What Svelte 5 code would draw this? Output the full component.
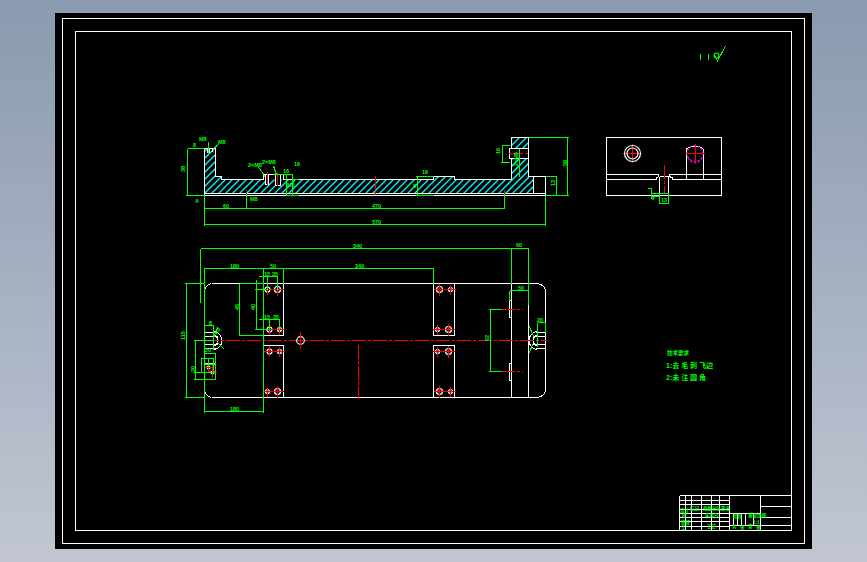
<script>
	// page coordinates: the svg viewBox starts where the black sheet does
	const white = `
		M62.5 18.5 H804.5 V543.5 H62.5 Z
		M75.5 31.5 H791.5 V530.5 H75.5 Z

		M204.5 148.5 H215.5 V176.5 H221.5 V179.5 H263.5 V174.5 H283.5 V179.5 H433.5 V176.5 H454.5 V179.5
		H511.5 V158.5 H509.5 V148.5 H511.5 V137.5 H528.5 V176.5 H545.5 V195.5 H204.5 Z
		M204.5 193.5 H545.5 M533.5 176.5 V193.5 M509.5 148.5 H528.5 M509.5 158.5 H528.5
		M265.5 174.5 V184.5 H268.5 V174.5 M275.5 174.5 V185.5 H280.5 V174.5 M283.5 174.5 V179.5
		M207.5 148.5 V152.5 H209.5 V148.5 M212.5 148.5 V151.5

		M606.5 137.5 H721.5 V195.5 H606.5 Z
		M606.5 174.5 H658.5 V176.5 L656.5 178 V179.5 H606.5
		M721.5 174.5 H669.5 V176.5 L672.5 178 V179.5 H721.5
		M659.5 176.5 V195.5 M668.5 176.5 V195.5 M659.5 176.5 H668.5
		M686.5 148.5 V179.5 M703.5 148.5 V179.5 M686.5 148.5 Q695 144 703.5 148.5

		M211.5 283.5 H536.5 Q545.5 284 545.5 292.5 V388.5 Q545.5 397 536.5 397.5 H211.5
		M211.5 283.5 Q205 285 204.5 291.5 V390 Q205 396 211.5 397.5
		M204.5 332.5 H216 M204.5 336.5 H218 M204.5 344.5 H218 M204.5 348.5 H216
		M214 331 Q222 334 222 340.5 Q222 347 214 350 M214 335 Q218 337 218 340.5 Q218 344 214 346
		M263.5 283.5 V335.5 H283.5 V283.5 M263.5 397.5 V345.5 H283.5 V397.5
		M433.5 283.5 V335.5 H454.5 V283.5 M433.5 397.5 V345.5 H454.5 V397.5
		M511.5 283.5 V397.5 M528.5 305 V397.5
		M511.5 300.5 H509.5 V317.5 H511.5 M511.5 363.5 H509.5 V380.5 H511.5
		M545.5 332.5 H536 M545.5 336.5 H533 M545.5 344.5 H533 M545.5 348.5 H536
		M537 331 Q529 334 529 340.5 Q529 347 537 350 M537 335 Q533 337 533 340.5 Q533 344 537 346
		M204.5 363.5 H215.5 V379.5 H204.5

		M679.5 495.5 H791.5 M679.5 530.5 V495.5
		M729.5 495.5 V530.5 M760.5 495.5 V530.5
		M760.5 506.5 H791.5 M760.5 517.5 H791.5 M729.5 525.5 H791.5 M729.5 513.5 H760.5
		M679.5 500.5 H729.5 M679.5 504.5 H729.5 M679.5 509.5 H729.5 M679.5 513.5 H729.5
		M679.5 517.5 H729.5 M679.5 521.5 H729.5 M679.5 526.5 H729.5
		M685.5 495.5 V530.5 M691.5 495.5 V530.5 M701.5 495.5 V530.5 M711.5 495.5 V530.5 M719.5 495.5 V530.5
		M733.5 513.5 V525.5 M737.5 513.5 V525.5 M741.5 513.5 V525.5 M745.5 513.5 V525.5 M753.5 513.5 V525.5
	`;

	const green = `
		M187.5 148.5 V195.5 M187.5 148.5 H204.5 M186 195.5 H204.5
		M204.5 195.5 V225.5 M204.5 208.5 H504.5 M204.5 224.5 H545.5
		M246.5 193.5 V208.5 M504.5 193.5 V208.5 M545.5 195.5 V225.5
		M286.5 174.5 V195.5 H298.5 M292.5 174.5 V195.5 M273.5 174.5 H292.5 M292.5 179.5 H298.5 M285.5 195.5 H292.5
		M208.5 142 V153 M213 149 L219.5 143.5 M258.5 167 L265 176.5 M273.5 166 L276.5 175
		M417.5 176.5 V195.5 M416 176.5 H433.5 M416 195.5 H433.5
		M502.5 145.5 V162.5 M502 145.5 H510 M501 162.5 H510 M519.5 148.5 V176.5
		M528.5 137.5 H569 M567.5 137.5 V195.5 M545.5 195.5 H569 M556.5 176.5 V195.5 M545.5 176.5 H556.5

		M651.5 188.5 V199 M648 188.5 H651.5 M651.5 193.5 H668.5 M651.5 196.5 H659.5
		M659.5 193.5 V203.5 H668.5 V193.5
		M700.5 54 V60 M708.5 54 V60 M714.5 55 L717.5 61 L725.5 46

		M200.5 248.5 H528.5 M200.5 248.5 V302.5 M528.5 248.5 V305 M511.5 248.5 V283.5
		M204.5 267.5 V412.5 M204.5 268.5 H433.5 M433.5 268.5 V283.5
		M263.5 267.5 V412.5 M283.5 267.5 V283.5 M204.5 411.5 H263.5
		M186.5 283.5 V397.5 M185 283.5 H204.5 M185 397.5 H204.5
		M239.5 283.5 V335.5 M239.5 283.5 H263.5 M239.5 335.5 H263.5
		M256.5 279.5 V329.5 M255 289.5 H267.5 M255 329.5 H269.5
		M259 276.5 H277.5 M267.5 276.5 V289.5 M277.5 276.5 V289.5
		M259 319.5 H279.5 M269.5 319.5 V329.5 M279.5 319.5 V329.5
		M195.5 340.5 V379.5 M194 340.5 H213.5 M194 379.5 H215.5
		M205 353.5 H215.5 M215.5 353.5 V379.5 M201 358.5 H213.5 M201.5 358.5 V373 M208.5 358.5 V367 M213.5 358.5 V372.5
		M194 372.5 H212.5 M204.5 364.5 H215.5 M213.5 325.5 V350 M204.5 325.5 H213.5
		M213.5 338 L218 327 M217 342 L224 349
		M490.5 309.5 V371.5 M489 309.5 H501.5 M489 371.5 H501.5
		M509.5 290.5 H528.5 M509.5 290.5 V300.5 M537.5 322.5 H545.5 M537.5 322.5 V346.5 M545.5 322.5 V332.5
		M529 326 L534 337 M529 353 L533 344
	`;

	const red = `
		M208.5 151 V153 M213.5 151 V153 M267 172 V185 M277.5 172 V186 M246.5 190 V194 M504.5 190 V194
		M632.5 144 V163 M623 153.5 H642 M695 144 V163 M686 153.5 H705
		M208 371 H216 M208.5 362 V372 M212.5 364 V378 M204 372.5 H217
	`;

	// bolt holes on the plan view, [x, y, radius]
	const holes = [
		[267.5, 289.5, 2.5], [277.5, 289.5, 3], [269.5, 329.5, 2.5], [279.5, 329.5, 2],
		[269.5, 351.5, 2.5], [279.5, 351.5, 2], [267.5, 391.5, 2], [277.5, 391.5, 3],
		[439.5, 289.5, 3], [450.5, 289.5, 2], [437.5, 329.5, 2], [448.5, 329.5, 3],
		[437.5, 351.5, 2], [448.5, 351.5, 3], [439.5, 391.5, 3], [450.5, 391.5, 2],
		[208.5, 367.5, 1.5], [212.5, 372.5, 1.5]
	];

	const hatch = Array.from({ length: 58 }, (_, i) => {
		const x = 146 + i * 7;
		return `M${x} 196 L${x + 60} 136`;
	}).join(' ');

	const labels = [
		{ x: 195, y: 203, t: 'A' },
		{ x: 193, y: 147, t: '8' },
		{ x: 199, y: 141, t: 'M8' },
		{ x: 218, y: 144, t: 'M8' },
		{ x: 248, y: 167, t: '2×M8' },
		{ x: 262, y: 164, t: '2×M8' },
		{ x: 283, y: 173, t: '16' },
		{ x: 294, y: 166, t: '16' },
		{ x: 287, y: 187, t: 'M8' },
		{ x: 250, y: 201, t: 'M8' },
		{ x: 223, y: 208, t: '60' },
		{ x: 372, y: 208, t: '470' },
		{ x: 372, y: 224, t: '570' },
		{ x: 422, y: 174, t: '16' },
		{ x: 413, y: 188, t: '8' },
		{ x: 185, y: 172, t: '38', r: -90 },
		{ x: 500, y: 154, t: '16', r: -90 },
		{ x: 518, y: 166, t: '2×M8', r: -90 },
		{ x: 567, y: 166, t: '58', r: -90 },
		{ x: 555, y: 186, t: '13', r: -90 },
		{ x: 655, y: 200, t: '4', r: -90 },
		{ x: 661, y: 202, t: '13' },

		{ x: 353, y: 248, t: '340' },
		{ x: 230, y: 268, t: '180' },
		{ x: 270, y: 268, t: '50' },
		{ x: 355, y: 268, t: '340' },
		{ x: 516, y: 247, t: '60' },
		{ x: 264, y: 276, t: '15' },
		{ x: 272, y: 276, t: '35' },
		{ x: 264, y: 319, t: '15' },
		{ x: 273, y: 319, t: '35' },
		{ x: 230, y: 411, t: '180' },
		{ x: 518, y: 290, t: '50' },
		{ x: 537, y: 322, t: '20' },
		{ x: 185, y: 340, t: '115', r: -90 },
		{ x: 239, y: 310, t: '45', r: -90 },
		{ x: 255, y: 310, t: '40', r: -90 },
		{ x: 195, y: 372, t: '20', r: -90 },
		{ x: 489, y: 341, t: '62', r: -90 },
		{ x: 209, y: 325, t: '8' },
		{ x: 217, y: 335, t: 'R8', r: -60 },
		{ x: 205, y: 352, t: '20' }
	];

	const titleTexts = [
		{ x: 680, y: 512, t: '设计' },
		{ x: 690, y: 510, t: '标记' },
		{ x: 703, y: 510, t: '处数分区' },
		{ x: 721, y: 510, t: '签名' },
		{ x: 682, y: 517, t: '校' },
		{ x: 705, y: 517, t: '年月日' },
		{ x: 681, y: 524, t: '审核' },
		{ x: 681, y: 529, t: '工' },
		{ x: 707, y: 528, t: '工艺' },
		{ x: 733, y: 518, t: '阶段' },
		{ x: 748, y: 517, t: '重量比例' },
		{ x: 753, y: 524, t: '1:1' },
		{ x: 732, y: 528, t: '共' },
		{ x: 740, y: 529, t: '张' },
		{ x: 748, y: 528, t: '第' },
		{ x: 756, y: 529, t: '张' }
	];
</script>

<div class="desktop">
	<div class="sheet">
		<svg viewBox="55 13 757 536" width="757" height="536" role="img" aria-label="CAD drawing">
			<defs>
				<clipPath id="section">
					<path d="M204.5 148.5 H215.5 V176.5 H221.5 V179.5 H265.5 V184.5 H268.5 V179.5 H275.5 V185.5 H280.5 V179.5 H433.5 V176.5 H454.5 V179.5 H511.5 V158.5 H528.5 V176.5 H533.5 V193.5 H204.5 Z M511.5 137.5 H528.5 V148.5 H511.5 Z" />
				</clipPath>
			</defs>

			<path class="hatch" d={hatch} clip-path="url(#section)" />
			<path class="line white" d={white} />

			<!-- centre lines -->
			<path class="line centre" d="M205 340.5 H547 M358.5 345 V399 M664.5 165 V193 M501 309.5 H523 M501 371.5 H523 M509 153.5 H530 M375.5 176 V197" />
			<path class="line red" d={red} />

			{#each holes as [x, y, r]}
				<circle class="hole" cx={x} cy={y} {r} />
				<path class="line red" d={`M${x} ${y - r - 3} V${y + r + 3} M${x - r - 3} ${y} H${x + r + 3}`} />
			{/each}

			<circle class="hole" cx="300.5" cy="340.5" r="3.8" />
			<path class="line red" d="M300.5 332 V349" />

			<!-- side view -->
			<circle class="hole" cx="632.5" cy="153.5" r="8" />
			<circle class="hole" cx="632.5" cy="153.5" r="5.5" />
			<circle class="magenta" cx="695" cy="153.5" r="8" />
			<path class="magenta" d="M688 158 Q695 168 702 158" />
			<path class="line red" d="M695 144 V163 M686 153.5 H705" />

			<path class="line green" d={green} />
			<circle class="green-ring" cx="716.5" cy="55.5" r="2.5" />

			{#each labels as l}
				<text class="dim" x={l.x} y={l.y} transform={l.r ? `rotate(${l.r} ${l.x} ${l.y})` : undefined}>{l.t}</text>
			{/each}

			<!-- notes -->
			<text class="heading" x="667" y="355">技术要求</text>
			<text class="note" x="666" y="368">1:去 毛 刺 飞边</text>
			<text class="note" x="666" y="380">2:未 注 圆 角</text>

			<!-- title block -->
			{#each titleTexts as item}
				<text class="title" x={item.x} y={item.y}>{item.t}</text>
			{/each}
		</svg>
	</div>
</div>

<style>
	:global(body) {
		margin: 0;
	}

	.desktop {
		box-sizing: border-box;
		width: 867px;
		height: 562px;
		padding: 13px 55px;
		background: linear-gradient(180deg, #8a9ab0 0%, #c1c6d2 100%);
		overflow: hidden;
	}

	.sheet {
		width: 757px;
		height: 536px;
		background: #000;
	}

	svg {
		display: block;
	}

	.line {
		fill: none;
		stroke-width: 1;
		shape-rendering: crispEdges;
	}

	.white {
		stroke: #fff;
	}

	.green {
		stroke: #00ff00;
	}

	.red {
		stroke: #ff0000;
	}

	.centre {
		stroke: #ff0000;
		stroke-dasharray: 14 2 3 2;
	}

	.hatch {
		fill: none;
		stroke: #00ffff;
		stroke-width: 1.3;
	}

	.hole {
		fill: none;
		stroke: #fff;
		stroke-width: 1.2;
	}

	.magenta {
		fill: none;
		stroke: #ff00ff;
		stroke-width: 1.2;
		stroke-dasharray: 2 2;
	}

	.green-ring {
		fill: none;
		stroke: #00ff00;
		stroke-width: 1.2;
	}

	.dim {
		fill: #00ff00;
		font-family: "Liberation Sans", sans-serif;
		font-size: 5.5px;
		font-weight: 700;
	}

	.heading {
		fill: #00ff00;
		font-family: "Liberation Sans", "Noto Sans CJK SC", sans-serif;
		font-size: 5.5px;
		font-weight: 700;
	}

	.note {
		fill: #00ff00;
		font-family: "Liberation Sans", "Noto Sans CJK SC", sans-serif;
		font-size: 7px;
		font-weight: 700;
	}

	.title {
		fill: #00ff00;
		font-family: "Liberation Sans", "Noto Sans CJK SC", sans-serif;
		font-size: 4.5px;
		font-weight: 700;
	}
</style>
